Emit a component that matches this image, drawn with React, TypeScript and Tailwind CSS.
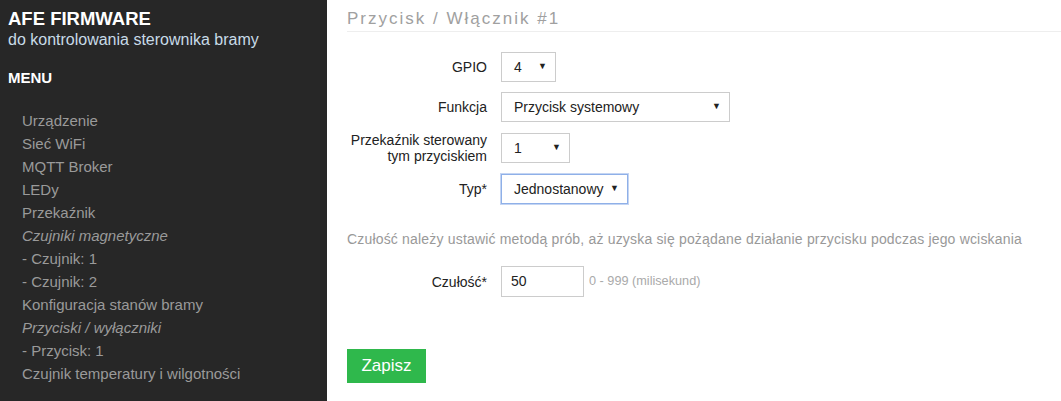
const MENU: { label: string; italic?: boolean }[] = [
  { label: 'Urządzenie' },
  { label: 'Sieć WiFi' },
  { label: 'MQTT Broker' },
  { label: 'LEDy' },
  { label: 'Przekaźnik' },
  { label: 'Czujniki magnetyczne', italic: true },
  { label: '- Czujnik: 1' },
  { label: '- Czujnik: 2' },
  { label: 'Konfiguracja stanów bramy' },
  { label: 'Przyciski / wyłączniki', italic: true },
  { label: '- Przycisk: 1' },
  { label: 'Czujnik temperatury i wilgotności' },
];

function Select({ value, width, focus }: { value: string; width: string; focus?: boolean }) {
  return (
    <div
      className={`flex items-center justify-between h-[30px] pl-[12px] pr-[8px] bg-white text-[14px] text-[#222] border ${
        focus ? 'border-[#8fb0e8] shadow-[0_0_0_1px_#c4d5f3]' : 'border-[#ccc]'
      } ${width}`}
    >
      <span>{value}</span>
      <span className="text-[9px] text-[#222]">▼</span>
    </div>
  );
}

function Row({ label, children }: { label: React.ReactNode; children: React.ReactNode }) {
  return (
    <div className="flex items-center gap-[14px]">
      <div className="w-[140px] text-right text-[14px] leading-[16px] text-[#222]">{label}</div>
      {children}
    </div>
  );
}

export default function App() {
  return (
    <div className="flex w-[1061px] h-[401px] bg-white font-[family-name:'Liberation_Sans',Arial,sans-serif] overflow-hidden">
      <aside className="w-[327px] shrink-0 bg-[#272727] pl-[8px] pt-[8px]">
        <div className="text-[18.5px] font-bold leading-[22px] text-white">AFE FIRMWARE</div>
        <div className="text-[16px] leading-[20px] text-[#c8dbe8]">do kontrolowania sterownika bramy</div>
        <div className="mt-[18px] text-[15px] font-bold leading-[20px] text-white">MENU</div>
        <ul className="mt-[21px] pl-[14px]">
          {MENU.map((m) => (
            <li
              key={m.label}
              className={`text-[15px] leading-[23px] text-[#9a9a9a] ${m.italic ? 'italic' : ''}`}
            >
              {m.label}
            </li>
          ))}
        </ul>
      </aside>
      <main className="flex-1 pl-[20px] pt-[9px]">
        <h2 className="text-[17px] leading-[20px] tracking-[2px] text-[#a0a0a0] pb-[2px] border-b border-[#eee]">
          Przycisk / Włącznik #1
        </h2>
        <div className="mt-[20px] flex flex-col gap-[10px]">
          <Row label="GPIO">
            <Select value="4" width="w-[55px]" />
          </Row>
          <Row label="Funkcja">
            <Select value="Przycisk systemowy" width="w-[229px]" />
          </Row>
          <Row
            label={
              <>
                Przekaźnik sterowany
                <br />
                tym przyciskiem
              </>
            }
          >
            <Select value="1" width="w-[69px]" />
          </Row>
          <Row label="Typ*">
            <Select value="Jednostanowy" width="w-[127px]" focus />
          </Row>
        </div>
        <p className="mt-[27px] text-[14px] leading-[16px] text-[#999] tracking-[0.18px] whitespace-nowrap">
          Czułość należy ustawić metodą prób, aż uzyska się pożądane działanie przycisku podczas jego wciskania
        </p>
        <div className="mt-[19px]">
          <Row label="Czułość*">
            <div className="flex items-center gap-[5px]">
              <div className="flex items-center h-[31px] w-[83px] pl-[9px] border border-[#ccc] text-[14px] text-[#222]">
                50
              </div>
              <span className="text-[12.7px] text-[#aaa]">0 - 999 (milisekund)</span>
            </div>
          </Row>
        </div>
        <button className="mt-[52px] flex items-center justify-center w-[79px] h-[34px] bg-[#2fb84c] text-white text-[17px]">
          Zapisz
        </button>
      </main>
    </div>
  );
}
